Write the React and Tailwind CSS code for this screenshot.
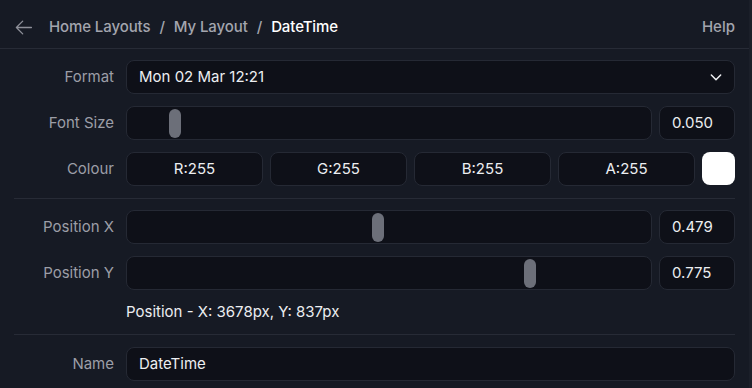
import { useState } from "react";

const box = "h-[34px] rounded-lg border border-[#252934] bg-[#0e1018]";

function Label({ children }) {
  return (
    <div className="w-[100px] shrink-0 text-right text-[15px] text-[#9c9ea7]">
      {children}
    </div>
  );
}

function Slider({ pos }) {
  return (
    <div className={`${box} relative flex-1`}>
      <div
        className="absolute top-[2px] h-[29px] w-[12px] rounded-md bg-[#6c6f79]"
        style={{ left: `calc(${pos} * (100% - 12px))` }}
      />
    </div>
  );
}

function SliderRow({ label, pos, value }) {
  return (
    <div className="flex items-center gap-3">
      <Label>{label}</Label>
      <div className="flex flex-1 gap-[7px]">
        <Slider pos={pos} />
        <div className={`${box} flex w-[76px] items-center pl-3 text-[15px] text-[#eceef1]`}>
          {value}
        </div>
      </div>
    </div>
  );
}

export default function App() {
  const [format] = useState("Mon 02 Mar 12:21");

  return (
    <div
      className="flex h-[388px] w-[752px] overflow-hidden bg-[#161a24] text-[#eceef1]"
      style={{ fontFamily: "Inter, 'Noto Sans', sans-serif" }}
    >
      <div className="flex flex-1 flex-col">
        <div className="flex h-[49px] items-center border-b border-[#272b36] pl-[14px] pr-[14px] pt-[7px]">
          <svg width="19" height="19" viewBox="0 0 24 24" fill="none" stroke="#8e9099" strokeWidth="1.6" strokeLinecap="round" strokeLinejoin="round">
            <path d="M22 12H3M11 4l-8 8 8 8" />
          </svg>
          <div className="ml-[16px] flex items-center gap-[9px] text-[15px] font-medium tracking-[-0.1px]">
            <span className="text-[#a3a5ae]">Home Layouts</span>
            <span className="text-[#a3a5ae]">/</span>
            <span className="text-[#a3a5ae]">My Layout</span>
            <span className="text-[#a3a5ae]">/</span>
            <span className="text-white">DateTime</span>
          </div>
          <div className="ml-auto text-[15px] font-medium text-[#a3a5ae]">Help</div>
        </div>

        <div className="flex flex-col gap-3 px-[14px] pt-[11px]">
          <div className="flex items-center gap-3">
            <Label>Format</Label>
            <div className={`${box} flex flex-1 items-center justify-between pl-3 pr-[10px] text-[15px]`}>
              <span>{format}</span>
              <svg width="16" height="16" viewBox="0 0 24 24" fill="none" stroke="#f2f3f5" strokeWidth="2.2" strokeLinecap="round" strokeLinejoin="round">
                <path d="M5 9l7 7 7-7" />
              </svg>
            </div>
          </div>

          <SliderRow label="Font Size" pos={0.083} value="0.050" />

          <div className="flex items-center gap-3">
            <Label>Colour</Label>
            <div className="flex flex-1 gap-[7px]">
              {["R:255", "G:255", "B:255", "A:255"].map((c) => (
                <div key={c} className={`${box} flex flex-1 items-center justify-center text-[15px]`}>
                  {c}
                </div>
              ))}
              <div className="h-[33px] w-[33px] rounded-lg bg-white" />
            </div>
          </div>

          <div className="-mb-px border-t border-[#272b36]" />

          <SliderRow label="Position X" pos={0.479} value="0.479" />
          <SliderRow label="Position Y" pos={0.775} value="0.775" />

          <div className="flex gap-3">
            <div className="w-[100px] shrink-0" />
            <div className="h-[20px] text-[15px] leading-[20px]">Position - X: 3678px, Y: 837px</div>
          </div>

          <div className="border-t border-[#272b36]" />

          <div className="flex items-center gap-3">
            <Label>Name</Label>
            <div className={`${box} flex flex-1 items-center pl-3 text-[15px]`}>DateTime</div>
          </div>
        </div>
      </div>
      <div className="w-[3px] bg-[#1b1f29]" />
    </div>
  );
}
